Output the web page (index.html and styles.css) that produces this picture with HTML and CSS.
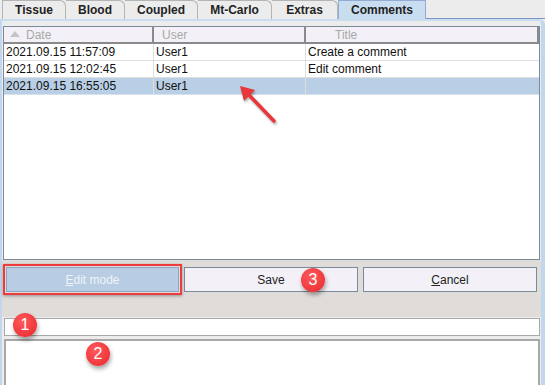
FILE: index.html
```html
<!DOCTYPE html>
<html lang="en">

<head>
    <meta charset="UTF-8">
    <meta name="viewport" content="width=device-width, initial-scale=1.0">
    <title>Comments</title>
    <link rel="stylesheet" href="styles.css">
</head>

<body>
    <div class="window">
        <div class="tabs">
            <div class="tab tab-tissue">Tissue</div>
            <div class="tab tab-blood">Blood</div>
            <div class="tab tab-coupled">Coupled</div>
            <div class="tab tab-mc">Mt-Carlo</div>
            <div class="tab tab-extras">Extras</div>
            <div class="tab tab-comments active">Comments</div>
            <div class="tab-filler"></div>
        </div>

        <div class="panel">
            <div class="table-box">
                <div class="row header">
                    <div class="cell col-date"><span class="sort-arrow"></span>Date</div>
                    <div class="cell col-user">User</div>
                    <div class="cell col-title">Title</div>
                </div>
                <div class="row">
                    <div class="cell col-date">2021.09.15 11:57:09</div>
                    <div class="cell col-user">User1</div>
                    <div class="cell col-title">Create a comment</div>
                </div>
                <div class="row">
                    <div class="cell col-date">2021.09.15 12:02:45</div>
                    <div class="cell col-user">User1</div>
                    <div class="cell col-title">Edit comment</div>
                </div>
                <div class="row selected">
                    <div class="cell col-date">2021.09.15 16:55:05</div>
                    <div class="cell col-user">User1</div>
                    <div class="cell col-title"></div>
                </div>
            </div>

            <div class="lower">
                <div class="button-group">
                    <div class="highlight">
                        <button class="btn btn-edit"><u>E</u>dit mode</button>
                    </div>
                    <button class="btn">Save</button>
                    <button class="btn"><u>C</u>ancel</button>
                </div>
            </div>

            <div class="title-field"></div>
            <div class="text-area"></div>
        </div>

        <!-- Annotation overlays -->
        <svg class="arrow" width="60" height="60" viewBox="0 0 60 60">
            <line x1="40" y1="41" x2="15" y2="15" stroke="#e8363a" stroke-width="3.5" stroke-linecap="round" />
            <polygon points="6,6 21,10 10,21" fill="#e8363a" />
        </svg>
        <div class="badge badge-1">1</div>
        <div class="badge badge-2">2</div>
        <div class="badge badge-3">3</div>
    </div>
</body>

</html>
```

FILE: styles.css
```css
body {
    margin: 0;
    font-family: "Liberation Sans", Arial, sans-serif;
    font-size: 12px;
    background-color: #ececec;
}

.window {
    position: relative;
    width: 545px;
    height: 385px;
    overflow: hidden;
}

/* Tab strip */
.tabs {
    display: flex;
    height: 19px;
    padding-left: 2px;
    background-color: #ececec;
}

.tab {
    box-sizing: border-box;
    height: 19px;
    padding-top: 2px;
    border: 1px solid #b4b4b4;
    border-bottom: none;
    border-left: none;
    border-top-right-radius: 6px;
    background-color: #ececec;
    font-weight: bold;
    font-size: 12px;
    color: #222;
    text-align: center;
}

.tab-tissue {
    width: 64px;
    border-left: 1px solid #b4b4b4;
}

.tab-blood {
    width: 59px;
}

.tab-coupled {
    width: 73px;
}

.tab-mc {
    width: 74px;
}

.tab-extras {
    width: 66px;
}

.tab-comments {
    width: 88px;
}

.tab.active {
    background-color: #c9ddf1;
    border: 1px solid #93abd0;
    border-bottom: none;
    border-radius: 0;
}

.tab-filler {
    flex: 1;
    border-bottom: 1px solid #7d95c4;
    height: 18px;
}

/* Main panel */
.panel {
    box-sizing: border-box;
    height: 366px;
    padding: 5px 1px 0 3px;
    border-top: 2px solid #c9ddf1;
    border-left: 2px solid #c2d6ec;
    border-right: 4px solid #c2d6ec;
    border-top-right-radius: 6px;
    background-color: #ececec;
    display: flex;
    flex-direction: column;
}

.table-box {
    box-sizing: border-box;
    height: 234px;
    margin-left: -2px;
    border: 1px solid #7b8a99;
    background-color: #fff;
}

.row {
    display: flex;
    height: 16px;
    border-bottom: 1px solid #dedede;
    line-height: 16px;
    color: #111;
}

.row.header {
    height: 15px;
    background-color: #f3f1f7;
    border-bottom: 2px solid #8a8a8a;
    color: #a8a8a8;
}

.row.selected {
    background-color: #b8cfe5;
    border-bottom: 1px solid #d8e2ec;
}

.cell {
    box-sizing: border-box;
    padding-left: 2px;
    border-right: 1px solid #dedede;
    white-space: nowrap;
    overflow: hidden;
}

.header .cell {
    border-right: 2px solid #8a8a8a;
}

.header .col-date {
    padding-left: 6px;
}

.header .col-user {
    padding-left: 8px;
}

.header .col-title {
    padding-left: 29px;
}

.col-date {
    width: 150px;
}

.col-user {
    width: 152px;
}

.col-title {
    flex: 1;
    border-right: none;
}

.sort-arrow {
    display: inline-block;
    width: 0;
    height: 0;
    margin-right: 6px;
    vertical-align: 2px;
    border-left: 5px solid transparent;
    border-right: 5px solid transparent;
    border-bottom: 6px solid #c4c4c4;
}

/* Buttons area */
.lower {
    margin: 0 -1px 0 -3px;
    height: 57px;
    background-color: #e0dcda;
}

.button-group {
    display: flex;
    gap: 5px;
    padding: 7px 3px 0 4px;
}

.btn {
    box-sizing: border-box;
    width: 174px;
    height: 25px;
    border: 1px solid #7b8a99;
    background-color: #f3f1f7;
    font-family: "Liberation Sans", Arial, sans-serif;
    font-size: 12px;
    color: #222;
    padding: 0;
}

.highlight {
    margin: -3px;
    padding: 1px;
    border: 2px solid #ee3b3f;
    box-shadow: 0 1px 3px rgba(0, 0, 0, 0.35);
    height: 25px;
}

.btn-edit {
    width: 173px;
    border: 1px solid #8ea6c2;
    background-color: #b8cde3;
    color: #eef3f8;
}

.title-field {
    box-sizing: border-box;
    height: 18px;
    margin-top: 1px;
    margin-left: -1px;
    border: 1px solid #a8a8a8;
    background-color: #fff;
}

.text-area {
    box-sizing: border-box;
    flex: 1;
    margin-top: 3px;
    margin-left: -1px;
    border: 2px solid #a8a8a8;
    border-bottom: none;
    background-color: #fff;
}

/* Annotations */
.badge {
    position: absolute;
    width: 24px;
    height: 24px;
    border-radius: 50%;
    background: radial-gradient(circle at 40% 35%, #ff5a5c, #e8262c);
    color: #fff;
    font-size: 16px;
    line-height: 24px;
    text-align: center;
    box-shadow: 1px 3px 4px rgba(0, 0, 0, 0.35);
}

.badge-1 {
    left: 13px;
    top: 313px;
}

.badge-2 {
    left: 86px;
    top: 342px;
}

.badge-3 {
    left: 301px;
    top: 268px;
}

.arrow {
    position: absolute;
    left: 234px;
    top: 80px;
    filter: drop-shadow(1px 2px 1px rgba(0, 0, 0, 0.3));
}
```
